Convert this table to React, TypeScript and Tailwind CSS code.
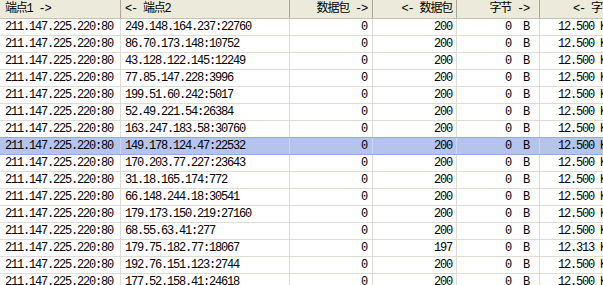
const rows: [string, string, string, string, string][] = [
  ["249.148.164.237:22760", "0", "200", "0", "12.500 KB"],
  ["86.70.173.148:10752", "0", "200", "0", "12.500 KB"],
  ["43.128.122.145:12249", "0", "200", "0", "12.500 KB"],
  ["77.85.147.228:3996", "0", "200", "0", "12.500 KB"],
  ["199.51.60.242:5017", "0", "200", "0", "12.500 KB"],
  ["52.49.221.54:26384", "0", "200", "0", "12.500 KB"],
  ["163.247.183.58:30760", "0", "200", "0", "12.500 KB"],
  ["149.178.124.47:22532", "0", "200", "0", "12.500 KB"],
  ["170.203.77.227:23643", "0", "200", "0", "12.500 KB"],
  ["31.18.165.174:772", "0", "200", "0", "12.500 KB"],
  ["66.148.244.18:30541", "0", "200", "0", "12.500 KB"],
  ["179.173.150.219:27160", "0", "200", "0", "12.500 KB"],
  ["68.55.63.41:277", "0", "200", "0", "12.500 KB"],
  ["179.75.182.77:18067", "0", "197", "0", "12.313 KB"],
  ["192.76.151.123:2744", "0", "200", "0", "12.500 KB"],
  ["177.52.158.41:24618", "0", "200", "0", "12.500 KB"],
];

const SELECTED = 7;

const cols = [
  { w: "w-[121px]", align: "pl-[5px] text-left" },
  { w: "w-[169px]", align: "pl-[4px] text-left" },
  { w: "w-[83px]", align: "pr-[5px] text-right" },
  { w: "w-[84px]", align: "pr-[4px] text-right" },
  { w: "w-[83px]", align: "pr-[10px] text-right" },
  { w: "w-[120px]", align: "pl-[18px] text-left" },
];

const headers = ["端点1 ->", "<- 端点2", "数据包 ->", "<- 数据包", "字节 ->", "<- 字节"];

export default function App() {
  return (
    <div
      className="w-[603px] h-[285px] overflow-hidden bg-white text-[12px] text-black tracking-[-1.2px]"
      style={{ fontFamily: '"Liberation Mono", "Noto Sans CJK SC", monospace' }}
    >
      <div className="flex w-max h-[19px] bg-[#ebeadb] border-b border-[#c5c2b2]">
        {headers.map((h, i) => (
          <div
            key={h}
            className={`${cols[i].w} ${i === 5 ? "pl-[33px]" : cols[i].align} shrink-0 h-[18px] leading-[18px] whitespace-pre border-r border-[#aca899]`}
          >
            {h}
          </div>
        ))}
      </div>
      {rows.map((r, idx) => {
        const sel = idx === SELECTED;
        const cells = ["211.147.225.220:80", r[0], r[1], r[2], `${r[3]}  B`, r[4]];
        return (
          <div
            key={idx}
            className={`flex w-max h-[17px] border-b ${
              sel ? "bg-[#b4c4ea] border-[#95abdd] -mt-px border-t h-[18px]" : "border-[#dedcd4]"
            }`}
          >
            {cells.map((c, i) => (
              <div
                key={i}
                className={`${cols[i].w} ${cols[i].align} shrink-0 leading-[16px] whitespace-pre border-r ${
                  sel ? "border-[#cdd6ee]" : "border-[#dedcd4]"
                }`}
              >
                {c}
              </div>
            ))}
          </div>
        );
      })}
    </div>
  );
}
